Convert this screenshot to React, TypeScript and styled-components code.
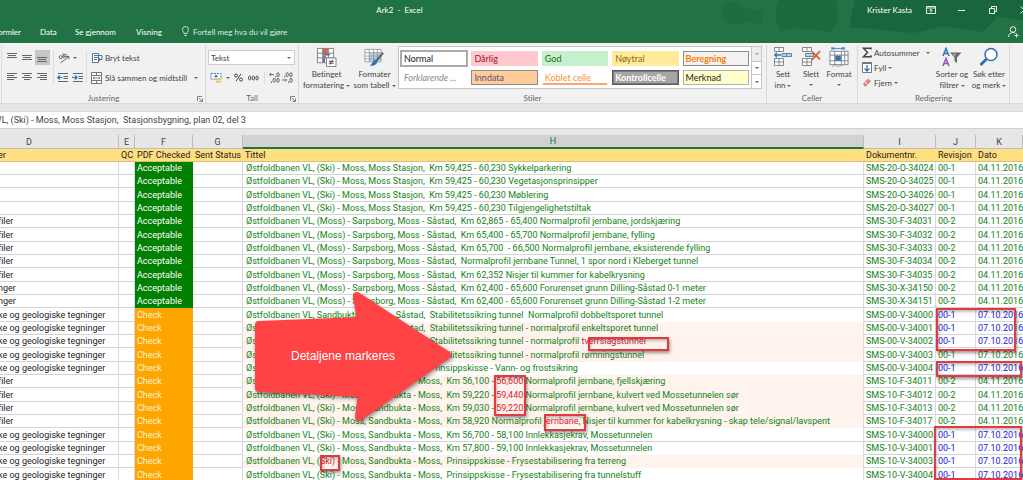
import React from "react";
import styled, { createGlobalStyle, css } from "styled-components";

const GlobalStyle = createGlobalStyle`
  *, *::before, *::after { box-sizing: border-box; }
  html, body { margin: 0; }
  body { font-family: Lato, "Open Sans", sans-serif; font-size: 8px; color: #444; overflow: hidden; font-variant-ligatures: none; }
  button, input, select { font: inherit; color: inherit; }
  svg { display: block; flex: none; }
`;

/* ---------- window frame ---------- */

const Window = styled.div`
  display: flex;
  flex-direction: column;
  height: 100vh;
  overflow: hidden;
  background: #e6e6e6;
`;

const TopArea = styled.header`
  position: relative;
  background: #217346;
  color: #fff;
  flex: none;
`;

const Backdrop = styled.svg`
  position: absolute;
  right: 0;
  top: 0;
`;

const TitleBar = styled.div`
  position: relative;
  display: flex;
  height: 20px;
  align-items: center;
`;

const Title = styled.h1`
  flex: 1;
  margin: 0;
  font-size: 8px;
  font-weight: 400;
  text-align: center;
  white-space: pre;
`;

const WindowControls = styled.div`
  display: flex;
  align-items: center;
  width: 224px;
  padding-left: 68px;
  overflow: hidden;
`;

const UserName = styled.span`
  width: 48px;
  flex: none;
`;

const BareButton = styled.button`
  display: flex;
  align-items: center;
  justify-content: center;
  border: 0;
  padding: 0;
  background: none;
`;

const CaptionButton = styled(BareButton)`
  width: 31px;
  height: 20px;
  flex: none;
`;

const TabBar = styled.nav`
  position: relative;
  display: flex;
  align-items: center;
  height: 23px;
  padding-right: 4px;
`;

const Tab = styled.a<{ $width: number }>`
  color: #fff;
  text-decoration: none;
  width: ${(p) => p.$width}px;
  white-space: nowrap;
  flex: none;
`;

const CutTab = styled(Tab)`
  display: flex;
  justify-content: flex-end;
  margin-right: 19px;
`;

const TellMe = styled(BareButton)`
  gap: 3px;
  color: #dcebe2;
  margin-right: auto;
`;

/* ---------- ribbon ---------- */

const Ribbon = styled.div`
  display: flex;
  flex: none;
  height: 61px;
  padding: 2px 13px 0 1px;
  background: #f1f1f1;
  border-bottom: 1px solid #dadada;
`;

const Group = styled.section<{ $width?: number }>`
  display: flex;
  flex-direction: column;
  border-left: 1px solid #d8d8d8;
  ${(p) => (p.$width ? css`flex: none; width: ${p.$width}px;` : css`flex: 1;`)}
  &:last-child { border-right: 1px solid #d8d8d8; }
`;

const GroupBody = styled.div`
  display: flex;
  flex: 1;
`;

const GroupLabel = styled.div`
  position: relative;
  height: 9px;
  line-height: 9px;
  text-align: center;
  color: #666;
`;

const Launcher = styled(BareButton)`
  position: absolute;
  right: 2px;
  top: 2px;
`;

const Stack = styled.div<{ $pad?: number }>`
  display: flex;
  flex-direction: column;
  gap: 5px;
  padding: 5px ${(p) => p.$pad ?? 3}px 0;
`;

const Line = styled.div`
  display: flex;
  align-items: center;
  height: 15px;
`;

const Tool = styled(BareButton)<{ $active?: boolean; $width?: number }>`
  width: ${(p) => p.$width ?? 15}px;
  height: 15px;
  gap: 3px;
  background: ${(p) => (p.$active ? "#c6c6c6" : "none")};
`;

const TextTool = styled(BareButton)`
  height: 15px;
  gap: 2px;
  white-space: nowrap;
  justify-content: flex-start;
`;

const Divider = styled.span`
  width: 1px;
  margin-top: 6px;
  height: 33px;
  background: #dcdcdc;
`;

const ShortDivider = styled(Divider)`
  height: 12px;
  margin: 0 3px 0 3px;
`;

const Caret = styled.i`
  display: inline-block;
  border: 2px solid transparent;
  border-top-color: #666;
  border-bottom: 0;
  vertical-align: middle;
`;

const WideCaret = styled(Caret)`
  margin-left: 5px;
`;

const FormatBox = styled.div`
  position: relative;
  display: flex;
  align-items: center;
  justify-content: flex-end;
  width: 87px;
  height: 15px;
  padding-right: 3px;
  border: 1px solid #cfcfcf;
  background: #fff;
`;

const FormatSelect = styled.select`
  flex: 1;
  appearance: none;
  border: 0;
  padding: 0 2px;
  height: 13px;
  background: none;
`;

const BigTool = styled(BareButton)<{ $width: number }>`
  flex-direction: column;
  justify-content: flex-start;
  width: ${(p) => p.$width}px;
  padding-top: 2px;
  line-height: 11px;
  white-space: nowrap;
  svg { height: 20px; margin-bottom: 2px; }
`;

const LoneCaret = styled(Caret)`
  margin-top: 4px;
`;

const Gallery = styled.div`
  display: flex;
  flex: 1;
  height: 43px;
  margin: 1px 4px 0 3px;
  border: 1px solid #c6c6c6;
  background: #fff;
`;

const Swatches = styled.div`
  display: grid;
  flex: 1;
  grid-template-columns: repeat(5, 1fr);
  grid-auto-rows: 15px;
  gap: 4px;
  padding: 4px 2px 0;
`;

const Swatch = styled.button<{ $bg?: string; $fg: string; $border?: string; $selected?: boolean; $look?: "bold" | "italic" | "underline" }>`
  padding: 0 2px;
  text-align: left;
  font-size: 9px;
  line-height: 13px;
  white-space: nowrap;
  background: ${(p) => p.$bg ?? "#fff"};
  color: ${(p) => p.$fg};
  border: 1px solid ${(p) => p.$border ?? "transparent"};
  ${(p) => p.$selected && css`outline: 1px solid #ababab;`}
  ${(p) => p.$look === "bold" && css`font-weight: 700;`}
  ${(p) => p.$look === "italic" && css`font-style: italic;`}
  ${(p) => p.$look === "underline" && css`box-shadow: inset 0 -1px #ffa666; border-bottom-color: #ffa666;`}
`;

const CheckSwatch = styled(Swatch)`
  box-shadow: inset 0 0 0 1px #7a7a7a;
`;

const GalleryScroll = styled.div`
  display: grid;
  width: 10px;
  grid-template-rows: repeat(3, 1fr);
  border-left: 1px solid #c6c6c6;
`;

const ScrollButton = styled(BareButton)<{ $off?: boolean }>`
  background: ${(p) => (p.$off ? "#e1e1e1" : "#fff")};
  opacity: ${(p) => (p.$off ? 0.6 : 1)};
  & + & { border-top: 1px solid #c6c6c6; }
`;

const EditStack = styled.div`
  display: flex;
  flex-direction: column;
  align-items: flex-start;
  width: 76px;
  padding-left: 4px;
`;

/* ---------- formula bar and sheet ---------- */

const FormulaBar = styled.div`
  flex: none;
  margin-top: 7px;
  background: #fff;
  border-top: 1px solid #dcdcdc;
  border-bottom: 1px solid #d0d0d0;
  height: 18px;
`;

const FormulaInput = styled.input`
  display: block;
  width: 100%;
  height: 16px;
  border: 0;
  padding: 0;
  background: none;
  font-family: Roboto, Lato, sans-serif;
  font-size: 9px;
  text-indent: -4px;
`;

const Sheet = styled.main`
  position: relative;
  flex: 1;
  margin-top: 6px;
  overflow: hidden;
  background: #fff;
`;

const Grid = styled.table`
  width: 100%;
  table-layout: fixed;
  border-collapse: separate;
  border-spacing: 0;
  font-family: Roboto, Lato, sans-serif;
  font-size: 9px;
  line-height: 12px;
`;

const Letter = styled.th<{ $selected?: boolean; $cut?: boolean }>`
  height: 14px;
  padding: 0;
  font-weight: 400;
  padding-right: ${(p) => (p.$cut ? 60 : 0)}px;
  border-right: 1px solid #bdbdbd;
  color: ${(p) => (p.$selected ? "#217346" : "#444")};
  background: ${(p) => (p.$selected ? "#d2d2d2" : "#e6e6e6")};
  border-bottom: ${(p) => (p.$selected ? "2px solid #217346" : "1px solid #bdbdbd")};
`;

const Field = styled.th`
  height: 13px;
  padding: 0 1px 0 2px;
  font-weight: 400;
  text-align: left;
  white-space: nowrap;
  color: #222;
  background: #ffdf80;
  border-bottom: 1px solid #d9c078;
`;

const FieldCut = styled(Field)`
  text-indent: -4px;
`;

const Cell = styled.td`
  height: 13px;
  padding: 0 0 0 2px;
  overflow: hidden;
  white-space: pre;
  color: #148214;
  border-right: 1px solid #d9d9e4;
  border-bottom: 1px solid #d4d4d8;
  &:last-child { border-right: 0; }
`;

const Discipline = styled(Cell)`
  color: #222;
  text-indent: -4px;
`;

const Status = styled(Cell)<{ $ok: boolean }>`
  color: ${(p) => (p.$ok ? "#fff" : "#fff3d6")};
  background: ${(p) => (p.$ok ? "#008000" : "#ffa500")};
  border-color: ${(p) => (p.$ok ? "#008000" : "#ffa500")};
`;

const TitleCell = styled(Cell)<{ $tint: boolean; $plain: boolean }>`
  padding-left: 3px;
  ${(p) => p.$tint && css`background: #fff3ee;`}
  ${(p) => p.$plain && css`border-bottom-color: transparent;`}
`;

const DateCell = styled(Cell)<{ $changed: boolean }>`
  color: ${(p) => (p.$changed ? "#2020d8" : "#148214")};
`;

const Row = styled.tr`
  &:nth-child(3n) > td { height: 14px; }
`;

const Changed = styled.span`
  color: #e02030;
`;

/* ---------- annotations over the sheet ---------- */

const Mark = styled.div<{ $left?: number; $right?: number; $top: number; $w: number; $h: number }>`
  position: absolute;
  ${(p) => (p.$left !== undefined ? css`left: ${p.$left}px;` : css`right: ${p.$right}px;`)}
  top: ${(p) => p.$top}px;
  width: ${(p) => p.$w}px;
  height: ${(p) => p.$h}px;
  border: 2px solid #e03c40;
  box-shadow: 1px 2px 3px rgba(0, 0, 0, 0.4), inset 1px 2px 3px rgba(0, 0, 0, 0.25);
`;

const Callout = styled.div`
  position: absolute;
  left: 250px;
  top: 152px;
  width: 210px;
  height: 144px;
  display: flex;
  align-items: center;
  padding: 0 0 6px 41px;
  color: #fff;
  font-family: "Liberation Sans", Arial, sans-serif;
  font-size: 12px;
`;

const CalloutShape = styled.svg`
  position: absolute;
  inset: 0;
  filter: drop-shadow(1px 2px 2px rgba(0, 0, 0, 0.45));
`;

const CalloutText = styled.span`
  position: relative;
`;

/* ---------- icons ---------- */

const Lines = ({ rows }: { rows: [number, number, number][] }) => (
  <svg width="11" height="11" viewBox="0 0 11 11" stroke="#666" strokeWidth="1">
    {rows.map(([x1, x2, y]) => (
      <path key={y} d={`M${x1} ${y + 0.5}H${x2}`} />
    ))}
  </svg>
);

const OrientationIcon = () => (
  <svg width="12" height="12" viewBox="0 0 12 12" fill="none" stroke="#555" strokeWidth="0.9">
    <circle cx="2.8" cy="5.2" r="1.5" /><path d="M4.3 3.6 5.6 6.2M4.7 1.4 7 5.4" /><circle cx="7.2" cy="3.6" r="1.4" />
    <path d="M2.5 11 10.8 4.6M10.9 7.2V4.5H8.2" />
  </svg>
);

const IndentIcon = ({ out }: { out?: boolean }) => (
  <svg width="12" height="11" viewBox="0 0 12 11" fill="none" stroke="#666">
    <path d="M1 1.5H11M6.5 4.5H11M6.5 6.5H11M1 9.5H11" />
    <path d={out ? "M5.5 5.5H.8M2.8 3.5.8 5.5 2.8 7.5" : "M0 5.5H5M3 3.5 5 5.5 3 7.5"} stroke="#2b6cb5" strokeWidth="1.2" />
  </svg>
);

const WrapIcon = () => (
  <svg width="12" height="12" viewBox="0 0 12 12" fill="none" stroke="#6a7480">
    <path d="M1.5 11V1.5H7.5V10.5H1.5" fill="#fff" />
    <path d="M3 3.5H11M3 5.5H8M3 7.5H6" stroke="#3c78b4" />
    <path d="M11 4V7.5H7.5M9 6 7.5 7.5 9 9" stroke="#3c78b4" />
  </svg>
);

const MergeIcon = () => (
  <svg width="12" height="12" viewBox="0 0 12 12" fill="none" stroke="#777">
    <path d="M.5.5H10.5V11.5H.5ZM.5 3.5H10.5M.5 8.5H10.5M5.5.5V3.5M5.5 8.5V11.5" fill="#fff" />
    <path d="M2 6H9M3.5 4.8 2 6 3.5 7.2M7.5 4.8 9 6 7.5 7.2" stroke="#3c78b4" strokeWidth="0.8" />
  </svg>
);

const CurrencyIcon = () => (
  <svg width="13" height="12" viewBox="0 0 13 12" fill="none">
    <path d="M1 1.5H11V7H1Z" fill="#fff" stroke="#3c78b4" strokeDasharray="2 1" />
    <circle cx="6" cy="4.2" r="1.4" fill="#3c78b4" />
    <ellipse cx="8.5" cy="7.4" rx="3" ry="1.2" fill="#f0bd62" /><ellipse cx="8.5" cy="9.4" rx="3" ry="1.2" fill="#f0bd62" />
    <path d="M5.6 8.4H11.4" stroke="#fff" strokeWidth="0.5" />
  </svg>
);

const DecimalIcon = ({ less }: { less?: boolean }) => (
  <svg width="11" height="11" viewBox="0 0 11 11" fill="none" stroke="#555" strokeWidth="0.9">
    <ellipse cx="9" cy="2.700" rx="1.200" ry="2" /><ellipse cx="9" cy="8.300" rx="1.200" ry="2" />
    {less ? (
      <>
        <ellipse cx="5.200" cy="2.700" rx="1.200" ry="2" /><path d="M2.500 4V5.200" />
        <path d="M0 8H4.500M3 6.500 4.500 8 3 9.500" stroke="#2b6cb5" /><path d="M6.500 9.500V11" />
      </>
    ) : (
      <>
        <ellipse cx="5.200" cy="8.300" rx="1.200" ry="2" /><path d="M2.500 9.500V11M6.500 4V5.200" />
        <path d="M5 2.500H.6M2 1 .6 2.500 2 4" stroke="#2b6cb5" />
      </>
    )}
  </svg>
);

const ConditionalIcon = () => (
  <svg width="21" height="21" viewBox="0 0 21 21">
    <path d="M1 1.5H18V16.5H1Z" fill="#fff" />
    <path d="M6.5 1.5H12V6.5H6.5Z" fill="#e0603a" /><path d="M6.5 6.5H14V9H6.5Z" fill="#3d79c2" />
    <path d="M6.5 9H10V12H6.5Z" fill="#e0603a" /><path d="M6.5 12H9V16H6.5Z" fill="#3d79c2" />
    <path d="M1 1.5H18V16.5H1ZM6.5 1.5V16.5M12.5 1.5V16.5M1 6.5H18M1 11.5H18" fill="none" stroke="#808080" />
    <path d="M10.500 11.500H20.500V20.500H10.500Z" fill="#fff" stroke="#808080" />
    <path d="M13 15H18M13 17H18M17 13.500 14 18.500" stroke="#333" strokeWidth="0.9" />
  </svg>
);

const TableFormatIcon = () => (
  <svg width="21" height="21" viewBox="0 0 21 21">
    <path d="M.5 2.500H17.500V15.500H.5Z" fill="#fff" /><path d="M5 6H17V15H5Z" fill="#b9d0e8" />
    <path d="M.5 2.500H17.500V15.500H.5ZM5 2.500V15.500M9.500 2.500V15.500M13.500 2.500V15.500M.5 6H17.500M.5 9.500H17.500M.5 12.500H17.500" fill="none" stroke="#8a8f96" strokeWidth="0.8" />
    <path d="M19.500 6 12.500 14.500" stroke="#666" strokeWidth="2.2" />
    <path d="M13.500 14.500C14 18.500 9 20.500 5.500 19.500 8.500 18.500 8 15 11 13.500Z" fill="#2f75bd" />
  </svg>
);

const CellsIcon = ({ remove }: { remove?: boolean }) => (
  <svg width="20" height="20" viewBox="0 0 20 20" fill="#fff" stroke="#7b7b7b" strokeWidth="0.9">
    <path d="M1.500.5H10.500V4.500H1.500ZM6 .5V4.500M1.500 11.500H10.500V18.500H1.500ZM6 11.500V18.500M1.500 15H10.500" />
    {remove ? (
      <>
        <path d="M4.500 6.500H12.500V9.500H4.500Z" fill="#b9d0e8" stroke="#4d7dad" />
        <path d="M11 4.500 19 12.500M19 4 11 13" fill="none" stroke="#d9532c" strokeWidth="1.700" />
      </>
    ) : (
      <>
        <path d="M9 6.500H18.500V9.500H9ZM13.500 6.500V9.500" fill="#b9d0e8" stroke="#4d7dad" />
        <path d="M8 8H1.500M4 5.800 1.700 8 4 10.200" fill="none" stroke="#2f75bd" strokeWidth="1.300" />
      </>
    )}
  </svg>
);

const FormatIcon = () => (
  <svg width="20" height="21" viewBox="0 0 20 21" fill="none" stroke="#7b7b7b" strokeWidth="0.9">
    <path d="M.5 4.500H19.500V18.500H.5ZM.5 8.500H19.500M.5 14.500H19.500M5.500 4.500V18.500M12.500 4.500V18.500M16 4.500V18.500" fill="#fff" />
    <path d="M6 9H12V14.500H6Z" fill="#2f75bd" stroke="none" />
    <path d="M3 1.500H15M5 0 3 1.500 5 3M13 0 15 1.500 13 3M2.500 0V3M15.500 0V3" stroke="#2f75bd" />
    <path d="M3 20.500 6 19 9 20.500 12 19 14 20.500" stroke="#999" />
  </svg>
);

const SumIcon = () => (
  <svg width="10" height="11" viewBox="0 0 10 11" fill="none" stroke="#444" strokeWidth="1.500">
    <path d="M9 2.500V1.200H1.500L5.500 5.500 1.500 9.800H9V8.300" />
  </svg>
);

const FillIcon = () => (
  <svg width="10" height="11" viewBox="0 0 10 11" fill="none">
    <path d="M.5.5H9.500V10.500H.5Z" fill="#fff" stroke="#777" /><path d="M.5 1H9.500" stroke="#777" strokeWidth="2" />
    <path d="M5 3V9M2.500 6.500 5 9 7.500 6.500" stroke="#2f75bd" strokeWidth="1.300" />
  </svg>
);

const EraserIcon = () => (
  <svg width="10" height="11" viewBox="0 0 10 11">
    <path d="M1 7 6 1.500 9 4 4.500 9.200H2.200Z" fill="#e8808c" /><path d="M3 5 6 8" stroke="#fff" strokeWidth="0.800" />
  </svg>
);

const SortIcon = () => (
  <svg width="20" height="20" viewBox="0 0 20 20" fill="none">
    <path d="M1 9 4 1.500 7 9M2 6.500H6" stroke="#2f75bd" strokeWidth="1.500" />
    <path d="M1 19 4 11.500 7 19M2 16.500H6" stroke="#9b4fb5" strokeWidth="1.500" />
    <path d="M8 5.500H19.500L15 10.500V16L12.500 14V10.500Z" fill="#6a6a6a" /><path d="M10.500 6.800H14L12.800 9.500Z" fill="#b5b5b5" />
  </svg>
);

const SearchIcon = () => (
  <svg width="20" height="20" viewBox="0 0 20 20" fill="none" stroke="#2f6fb5">
    <circle cx="12" cy="7.500" r="6" fill="#fff" strokeWidth="1.500" /><path d="M7.500 12 1.500 18" strokeWidth="2.800" />
  </svg>
);

const LauncherIcon = () => (
  <svg width="6" height="6" viewBox="0 0 6 6" fill="none" stroke="#777" strokeWidth="0.900">
    <path d="M.5 5V.5H5M2 2 5 5M5.500 2.500V5.500H2.500" />
  </svg>
);

/* ---------- data ---------- */

type Entry = { disc: string; title: React.ReactNode; doc: string; rev: string; date: string; ok?: boolean; changed?: boolean; tint?: boolean; plain?: boolean };

const ski = "Østfoldbanen VL, (Ski) - Moss, Moss Stasjon,  Km 59,425 - 60,230 ";
const sarp = "Østfoldbanen VL, (Moss) - Sarpsborg, Moss - Såstad,  ";
const sand = "Østfoldbanen VL, Sandbukta - Moss - Såstad,  ";
const skiSand = "Østfoldbanen VL, (Ski) - Moss, Sandbukta - Moss,  ";
const profiles = "filer";
const geo = "ke og geologiske tegninger";
const nov = "04.11.2016";
const oct = "07.10.2016";

const entries: Entry[] = [
  { disc: "", title: ski + "Sykkelparkering", doc: "SMS-20-O-34024", rev: "00-1", date: nov, ok: true },
  { disc: "", title: ski + "Vegetasjonsprinsipper", doc: "SMS-20-O-34025", rev: "00-1", date: nov, ok: true },
  { disc: "", title: ski + "Møblering", doc: "SMS-20-O-34026", rev: "00-1", date: nov, ok: true },
  { disc: "", title: ski + "Tilgjengelighetstiltak", doc: "SMS-20-O-34027", rev: "00-1", date: nov, ok: true },
  { disc: profiles, title: sarp + "Km 62,865 - 65,400 Normalprofil jernbane, jordskjæring", doc: "SMS-30-F-34031", rev: "00-2", date: nov, ok: true },
  { disc: profiles, title: sarp + "Km 65,400 - 65,700 Normalprofil jernbane, fylling", doc: "SMS-30-F-34032", rev: "00-2", date: nov, ok: true },
  { disc: profiles, title: sarp + "Km 65,700  - 66,500 Normalprofil jernbane, eksisterende fylling", doc: "SMS-30-F-34033", rev: "00-2", date: nov, ok: true },
  { disc: profiles, title: sarp + "Normalprofil jernbane Tunnel, 1 spor nord i Kleberget tunnel", doc: "SMS-30-F-34034", rev: "00-2", date: nov, ok: true },
  { disc: profiles, title: sarp + "Km 62,352 Nisjer til kummer for kabelkrysning", doc: "SMS-30-F-34035", rev: "00-2", date: nov, ok: true },
  { disc: "nger", title: sarp + "Km 62,400 - 65,600 Forurenset grunn Dilling-Såstad 0-1 meter", doc: "SMS-30-X-34150", rev: "00-2", date: nov, ok: true },
  { disc: "nger", title: sarp + "Km 62,400 - 65,600 Forurenset grunn Dilling-Såstad 1-2 meter", doc: "SMS-30-X-34151", rev: "00-2", date: nov, ok: true },
  { disc: geo, title: sand + "Stabilitetssikring tunnel  Normalprofil dobbeltsporet tunnel", doc: "SMS-00-V-34000", rev: "00-1", date: oct, changed: true, plain: true },
  { disc: geo, title: <>{sand}Stabilitetssikring tunnel <Changed>-</Changed> normalprofil enkeltsporet tunnel</>, doc: "SMS-00-V-34001", rev: "00-1", date: oct, changed: true, tint: true },
  { disc: geo, title: <>{sand}Stabilitetssikring tunnel <Changed>-</Changed> normalprofil <Changed>tverrslagstunnel</Changed></>, doc: "SMS-00-V-34002", rev: "00-1", date: oct, changed: true, tint: true },
  { disc: geo, title: <>{sand}Stabilitetssikring tunnel <Changed>-</Changed> normalprofil rømningstunnel</>, doc: "SMS-00-V-34003", rev: "00-1", date: oct, tint: true },
  { disc: geo, title: sand + "Prinsippskisse - Vann- og frostsikring", doc: "SMS-00-V-34004", rev: "00-1", date: oct, changed: true, plain: true },
  { disc: profiles, title: <>{skiSand}Km 56,100 - <Changed>56,600</Changed> Normalprofil jernbane, fjellskjæring</>, doc: "SMS-10-F-34011", rev: "00-2", date: nov, tint: true },
  { disc: profiles, title: <>{skiSand}Km 59,220 - <Changed>59,440</Changed> Normalprofil jernbane, kulvert ved Mossetunnelen sør</>, doc: "SMS-10-F-34012", rev: "00-2", date: nov, tint: true },
  { disc: profiles, title: <>{skiSand}Km 59,030 - <Changed>59,220</Changed> Normalprofil jernbane, kulvert ved Mossetunnelen sør</>, doc: "SMS-10-F-34013", rev: "00-2", date: nov, tint: true },
  { disc: profiles, title: <>{skiSand}Km 58,920 Normalprofil <Changed>jernbane</Changed>, Nisjer til kummer for kabelkrysning - skap tele/signal/lavspent</>, doc: "SMS-10-F-34017", rev: "00-2", date: nov, tint: true },
  { disc: geo, title: skiSand + "Km 56,700 - 58,100 Innlekkasjekrav, Mossetunnelen", doc: "SMS-10-V-34000", rev: "00-1", date: oct, changed: true },
  { disc: geo, title: skiSand + "Km 57,800 - 59,100 Innlekkasjekrav, Mossetunnelen", doc: "SMS-10-V-34001", rev: "00-1", date: oct, changed: true, plain: true },
  { disc: geo, title: <>Østfoldbanen VL, (<Changed>Ski)</Changed> - Moss, Sandbukta - Moss,  Prinsippskisse - Frysestabilisering fra terreng</>, doc: "SMS-10-V-34003", rev: "00-1", date: oct, changed: true, tint: true },
  { disc: geo, title: skiSand + "Prinsippskisse - Frysestabilisering fra tunnelstuff", doc: "SMS-10-V-34004", rev: "00-1", date: oct, changed: true },
];

/* ---------- sections ---------- */

const Header = () => (
  <TopArea>
    <Backdrop width="310" height="43" viewBox="0 0 310 43" fill="#17603a" fillOpacity="0.55">
      <path d="M8 6C14-1 24 0 30 8L48 11 50 24 34 22 22 26 10 20Z" fillOpacity="0.3" />
      <path d="M66 0H122C128 10 124 26 118 32L84 28 68 31C60 22 62 8 66 0Z" />
      <path d="M142 0H310V20L284 17 270 32 232 26 200 33 160 29 136 27Z" fillOpacity="0.7" />
    </Backdrop>
    <TitleBar>
      <Title>{"Ark2  -  Excel"}</Title>
      <WindowControls>
        <UserName>Krister Kasta</UserName>
        <CaptionButton aria-label="Båndvisning">
          <svg width="10" height="8" viewBox="0 0 10 8" fill="none" stroke="#fff" strokeWidth="0.9"><path d="M.5.5H9.500V7.500H.5ZM.5 2H9.500M5 6.500V3.500M3.500 4.800 5 3.300 6.500 4.800" /></svg>
        </CaptionButton>
        <CaptionButton aria-label="Minimer">
          <svg width="8" height="8" viewBox="0 0 8 8" stroke="#fff"><path d="M0 4.500H7" /></svg>
        </CaptionButton>
        <CaptionButton aria-label="Gjenopprett">
          <svg width="8" height="8" viewBox="0 0 8 8" fill="none" stroke="#fff" strokeWidth="0.9"><path d="M.5 2.500H5.500V7.500H.5ZM2.500 2.500V.5H7.500V5.500H5.500" /></svg>
        </CaptionButton>
        <CaptionButton aria-label="Lukk">
          <svg width="8" height="8" viewBox="0 0 8 8" stroke="#fff" strokeWidth="0.9"><path d="M.5.5 7.500 7.500M7.500.5.5 7.500" /></svg>
        </CaptionButton>
      </WindowControls>
    </TitleBar>
    <TabBar>
      <CutTab href="#formler" $width={21}>Formler</CutTab>
      <Tab href="#data" $width={35}>Data</Tab>
      <Tab href="#gjennom" $width={61}>Se gjennom</Tab>
      <Tab href="#visning" $width={45}>Visning</Tab>
      <TellMe>
        <svg width="9" height="11" viewBox="0 0 9 11" fill="none" stroke="#dcebe2" strokeWidth="0.9"><path d="M3 7.500C3 6 1.500 5.500 1.500 3.500A3 3 0 0 1 7.500 3.500C7.500 5.500 6 6 6 7.500ZM3.200 9.500H5.800" /></svg>
        Fortell meg hva du vil gjøre
      </TellMe>
      <BareButton aria-label="Del">
        <svg width="11" height="12" viewBox="0 0 11 12" fill="none" stroke="#fff" strokeWidth="0.9"><circle cx="5" cy="3.500" r="2.800" /><path d="M.5 11C.5 8.500 2.500 6.500 5 6.500 6 6.500 7 7 7.500 7.500M8.500 7.500V11.500M6.500 9.500H10.500" /></svg>
      </BareButton>
    </TabBar>
  </TopArea>
);

const RibbonBar = () => (
  <Ribbon>
    <Group $width={204}>
      <GroupBody>
        <Stack>
          <Line>
            <Tool aria-label="Toppjuster"><Lines rows={[[0, 10, 1], [1, 9, 3], [0, 10, 5]]} /></Tool>
            <Tool aria-label="Midtjuster"><Lines rows={[[0, 10, 3], [1, 9, 5], [0, 10, 7]]} /></Tool>
            <Tool aria-label="Bunnjuster" $active><Lines rows={[[0, 10, 5], [1, 9, 7], [0, 10, 9]]} /></Tool>
          </Line>
          <Line>
            <Tool aria-label="Venstrejuster"><Lines rows={[[0, 10, 1], [0, 7, 3], [0, 10, 5], [0, 7, 7]]} /></Tool>
            <Tool aria-label="Sentrer"><Lines rows={[[0, 10, 1], [2, 8, 3], [0, 10, 5], [2, 8, 7]]} /></Tool>
            <Tool aria-label="Høyrejuster"><Lines rows={[[0, 10, 1], [3, 10, 3], [0, 10, 5], [3, 10, 7]]} /></Tool>
          </Line>
        </Stack>
        <Divider />
        <Stack $pad={1}>
          <Line><Tool aria-label="Retning" $width={24}><OrientationIcon /><Caret /></Tool></Line>
          <Line>
            <Tool aria-label="Reduser innrykk"><IndentIcon out /></Tool>
            <Tool aria-label="Øk innrykk"><IndentIcon /></Tool>
          </Line>
        </Stack>
        <Divider />
        <Stack $pad={4}>
          <Line><TextTool><WrapIcon />Bryt tekst</TextTool></Line>
          <Line><TextTool><MergeIcon />Slå sammen og midtstill<WideCaret /></TextTool></Line>
        </Stack>
      </GroupBody>
      <GroupLabel>Justering<Launcher aria-label="Justering"><LauncherIcon /></Launcher></GroupLabel>
    </Group>
    <Group $width={93}>
      <GroupBody>
        <Stack $pad={2}>
          <FormatBox>
            <FormatSelect aria-label="Tallformat" defaultValue="Tekst"><option>Tekst</option><option>Standard</option></FormatSelect>
            <Caret />
          </FormatBox>
          <Line>
            <Tool aria-label="Regnskapsformat" $width={23}><CurrencyIcon /><Caret /></Tool>
            <Tool aria-label="Prosent"><svg width="9" height="9" viewBox="0 0 9 9" fill="none" stroke="#444"><circle cx="2" cy="2.500" r="1.500" /><circle cx="7" cy="6.500" r="1.500" /><path d="M7 .8 2 8.200" /></svg></Tool>
            <Tool aria-label="Tusenskille"><svg width="11" height="6" viewBox="0 0 11 6" fill="none" stroke="#444" strokeWidth="0.9"><ellipse cx="1.700" cy="3" rx="1.200" ry="2" /><ellipse cx="5.400" cy="3" rx="1.200" ry="2" /><ellipse cx="9.100" cy="3" rx="1.200" ry="2" /></svg></Tool>
            <ShortDivider />
            <Tool aria-label="Flere desimaler" $width={12}><DecimalIcon /></Tool>
            <Tool aria-label="Færre desimaler"><DecimalIcon less /></Tool>
          </Line>
        </Stack>
      </GroupBody>
      <GroupLabel>Tall<Launcher aria-label="Tall"><LauncherIcon /></Launcher></GroupLabel>
    </Group>
    <Group>
      <GroupBody>
        <BigTool $width={55}><ConditionalIcon /><span>Betinget</span><span>formatering <Caret /></span></BigTool>
        <BigTool $width={41}><TableFormatIcon /><span>Formater</span><span>som tabell <Caret /></span></BigTool>
        <Gallery>
          <Swatches>
            <Swatch $fg="#222" $border="#ababab" $selected>Normal</Swatch>
            <Swatch $fg="#b01020" $bg="#ffc7ce">Dårlig</Swatch>
            <Swatch $fg="#107020" $bg="#c6efce">God</Swatch>
            <Swatch $fg="#9c6510" $bg="#ffeb9c">Nøytral</Swatch>
            <Swatch $fg="#fa7d00" $bg="#f2f2f2" $border="#8c8c8c" $look="bold">Beregning</Swatch>
            <Swatch $fg="#8a8a8a" $look="italic">Forklarende ...</Swatch>
            <Swatch $fg="#5a5280" $bg="#ffcc99" $border="#8c8c8c">Inndata</Swatch>
            <Swatch $fg="#fa8d40" $look="underline">Koblet celle</Swatch>
            <CheckSwatch $fg="#fff" $bg="#a5a5a5" $border="#5a5a5a" $look="bold">Kontrollcelle</CheckSwatch>
            <Swatch $fg="#222" $bg="#ffffcc" $border="#b2b2b2">Merknad</Swatch>
          </Swatches>
          <GalleryScroll>
            <ScrollButton aria-label="Forrige" $off><Caret /></ScrollButton>
            <ScrollButton aria-label="Neste"><Caret /></ScrollButton>
            <ScrollButton aria-label="Mer"><Caret /></ScrollButton>
          </GalleryScroll>
        </Gallery>
      </GroupBody>
      <GroupLabel>Stiler</GroupLabel>
    </Group>
    <Group $width={91}>
      <GroupBody>
        <BigTool $width={32}><CellsIcon /><span>Sett</span><span>inn <Caret /></span></BigTool>
        <BigTool $width={24}><CellsIcon remove /><span>Slett</span><LoneCaret /></BigTool>
        <BigTool $width={32}><FormatIcon /><span>Format</span><LoneCaret /></BigTool>
      </GroupBody>
      <GroupLabel>Celler</GroupLabel>
    </Group>
    <Group $width={153}>
      <GroupBody>
        <EditStack>
          <TextTool><SumIcon />Autosummer<WideCaret /></TextTool>
          <TextTool><FillIcon />Fyll<Caret /></TextTool>
          <TextTool><EraserIcon />Fjern<Caret /></TextTool>
        </EditStack>
        <BigTool $width={36}><SortIcon /><span>Sorter og</span><span>filtrer <Caret /></span></BigTool>
        <BigTool $width={38}><SearchIcon /><span>Søk etter</span><span>og merk <Caret /></span></BigTool>
      </GroupBody>
      <GroupLabel>Redigering</GroupLabel>
    </Group>
  </Ribbon>
);

const Worksheet = () => (
  <Sheet>
    <Grid>
      <colgroup>
        <col style={{ width: 119 }} /><col style={{ width: 16 }} /><col style={{ width: 58 }} /><col style={{ width: 50 }} />
        <col /><col style={{ width: 72 }} /><col style={{ width: 40 }} /><col style={{ width: 47 }} />
      </colgroup>
      <thead>
        <tr>
          <Letter $cut>D</Letter><Letter>E</Letter><Letter>F</Letter><Letter>G</Letter>
          <Letter $selected>H</Letter><Letter>I</Letter><Letter>J</Letter><Letter>K</Letter>
        </tr>
        <tr>
          <FieldCut>er</FieldCut><Field>QC</Field><Field>PDF Checked</Field><Field>Sent Status</Field>
          <Field>Tittel</Field><Field>Dokumentnr.</Field><Field>Revisjon</Field><Field>Dato</Field>
        </tr>
      </thead>
      <tbody>
        {entries.map((e) => (
          <Row key={e.doc}>
            <Discipline>{e.disc}</Discipline>
            <Cell />
            <Status $ok={!!e.ok}>{e.ok ? "Acceptable" : "Check"}</Status>
            <Cell />
            <TitleCell $tint={!!e.tint} $plain={!!(e.tint || e.plain)}>{e.title}</TitleCell>
            <Cell>{e.doc}</Cell>
            <DateCell $changed={!!e.changed}>{e.rev}</DateCell>
            <DateCell $changed={!!e.changed}>{e.date}</DateCell>
          </Row>
        ))}
      </tbody>
    </Grid>
    <Mark $left={588} $top={202} $w={81} $h={14} />
    <Mark $left={494} $top={240} $w={32} $h={41} />
    <Mark $left={544} $top={279} $w={42} $h={17} />
    <Mark $left={320} $top={320} $w={20} $h={16} />
    <Mark $right={7} $top={173} $w={80} $h={43} />
    <Mark $right={1} $top={226} $w={86} $h={16} />
    <Mark $right={1} $top={291} $w={88} $h={54} />
    <Callout>
      <CalloutShape width="210" height="144" viewBox="0 0 210 144" fill="#ff4244" stroke="#ff4244" strokeWidth="8" strokeLinejoin="round">
        <path d="M9 38 111 34 107 9 197 68 109 130 112 106 9 101Z" />
      </CalloutShape>
      <CalloutText>Detaljene markeres</CalloutText>
    </Callout>
  </Sheet>
);

export default function App() {
  return (
    <Window>
      <GlobalStyle />
      <Header />
      <RibbonBar />
      <FormulaBar>
        <FormulaInput aria-label="Formellinje" defaultValue="VL, (Ski) - Moss, Moss Stasjon,  Stasjonsbygning, plan 02, del 3" />
      </FormulaBar>
      <Worksheet />
    </Window>
  );
}
